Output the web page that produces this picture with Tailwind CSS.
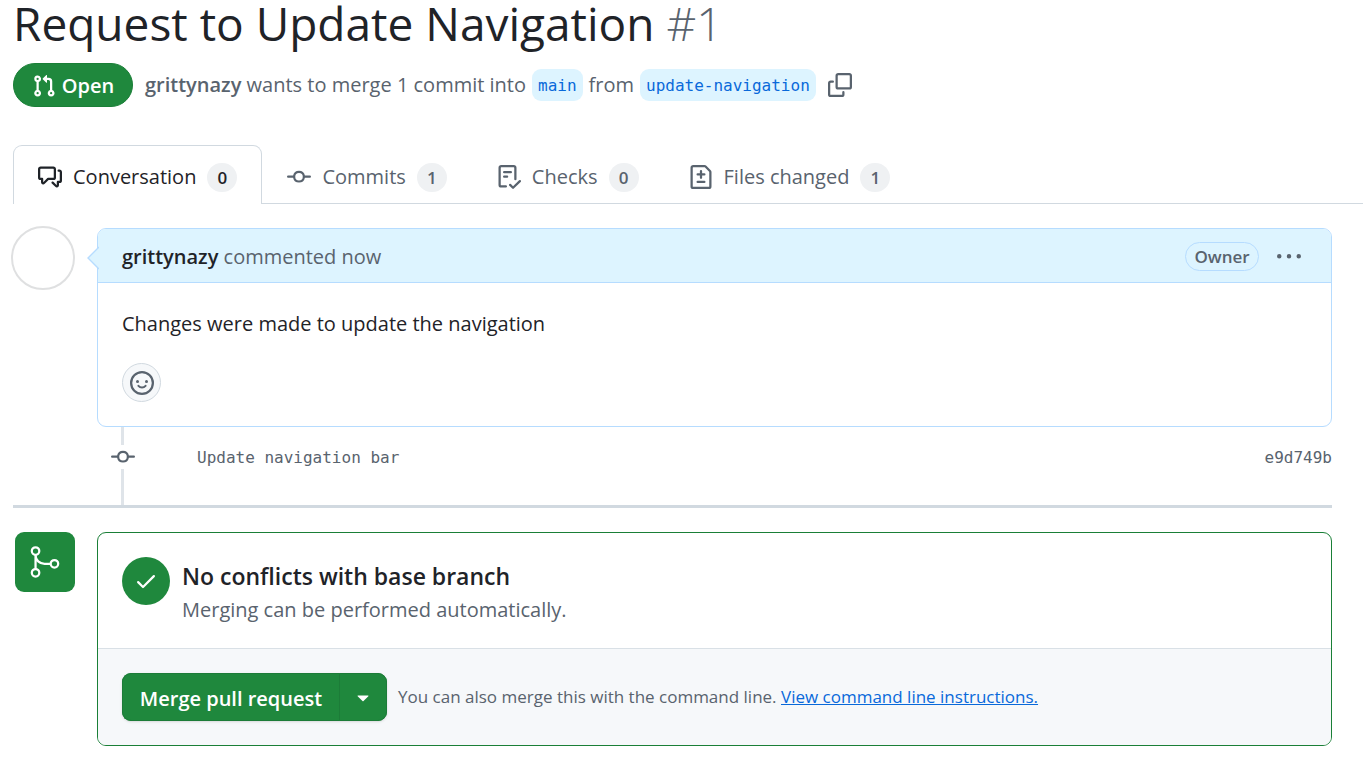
<!DOCTYPE html>
<html lang="en">
<head>
<meta charset="utf-8">
<meta name="viewport" content="width=device-width, initial-scale=1">
<title>Request to Update Navigation #1</title>
<script src="https://cdn.jsdelivr.net/npm/@tailwindcss/browser@4"></script>
</head>
<body class="bg-white font-['Open_Sans','Noto_Sans',sans-serif] text-[20px] leading-[30px] text-[#1f2328]">
<header class="pl-[13px]">
  <h1 class="text-[46px] leading-[46px] font-normal">Request to Update Navigation <span class="font-light text-[#59636e]">#1</span></h1>
  <div class="mt-[17px] flex items-center text-[#59636e]">
    <span class="mr-3 flex h-11 w-[120px] shrink-0 items-center justify-center gap-[6px] rounded-full border border-[#1a7f37] bg-[#1f883d] pt-[2px] font-semibold text-white">
      <svg class="size-6" viewBox="0 0 16 16" fill="currentColor" aria-hidden="true"><path d="M1.5 3.25a2.25 2.25 0 1 1 3 2.122v5.256a2.251 2.251 0 1 1-1.5 0V5.372A2.25 2.25 0 0 1 1.5 3.25Zm5.677-.177L9.573.677A.25.25 0 0 1 10 .854V2.5h1A2.5 2.5 0 0 1 13.5 5v5.628a2.251 2.251 0 1 1-1.5 0V5a1 1 0 0 0-1-1h-1v1.646a.25.25 0 0 1-.427.177L7.177 3.427a.25.25 0 0 1 0-.354ZM3.75 2.5a.75.75 0 1 0 0 1.5.75.75 0 0 0 0-1.5Zm0 9.5a.75.75 0 1 0 0 1.5.75.75 0 0 0 0-1.5Zm8.25.75a.75.75 0 1 0 1.5 0 .75.75 0 0 0-1.5 0Z"/></svg>
      Open
    </span>
    <p class="flex items-center gap-[6px] whitespace-nowrap">
      <span><a href="#" class="font-semibold">grittynazy</a> wants to merge 1 commit into</span>
      <a href="#" class="rounded-[9px] bg-[#ddf4ff] px-[6px] pt-[2px] font-['DejaVu_Sans_Mono',monospace] text-[16px] text-[#0969da]">main</a>
      <span>from</span>
      <a href="#" class="rounded-[9px] bg-[#ddf4ff] px-[6px] pt-[2px] font-['DejaVu_Sans_Mono',monospace] text-[16px] text-[#0969da]">update-navigation</a>
    </p>
    <button type="button" aria-label="Copy branch name" class="ml-3"><svg class="size-6" viewBox="0 0 16 16" fill="currentColor" aria-hidden="true"><path d="M0 6.75C0 5.784.784 5 1.75 5h1.5a.75.75 0 0 1 0 1.5h-1.5a.25.25 0 0 0-.25.25v7.5c0 .138.112.25.25.25h7.5a.25.25 0 0 0 .25-.25v-1.5a.75.75 0 0 1 1.5 0v1.5A1.75 1.75 0 0 1 9.25 16h-7.5A1.75 1.75 0 0 1 0 14.25Z"/><path d="M5 1.75C5 .784 5.784 0 6.75 0h7.5C15.216 0 16 .784 16 1.75v7.5A1.75 1.75 0 0 1 14.25 11h-7.5A1.75 1.75 0 0 1 5 9.25Zm1.75-.25a.25.25 0 0 0-.25.25v7.5c0 .138.112.25.25.25h7.5a.25.25 0 0 0 .25-.25v-7.5a.25.25 0 0 0-.25-.25Z"/></svg></button>
  </div>
  <nav aria-label="Pull request" class="mt-[38px] flex whitespace-nowrap text-[#59636e]">
    <a href="#" aria-current="page" class="flex h-[59px] items-center gap-[11px] rounded-t-[9px] border border-b-0 border-[#d1d9e0] px-6 pt-1 text-[#1f2328]">
      <svg class="size-6" viewBox="0 0 16 16" fill="currentColor" aria-hidden="true"><path d="M1.75 1h8.5c.966 0 1.75.784 1.75 1.75v5.5A1.75 1.75 0 0 1 10.25 10H7.061l-2.574 2.573A1.458 1.458 0 0 1 2 11.543V10h-.25A1.75 1.75 0 0 1 0 8.25v-5.5C0 1.784.784 1 1.75 1ZM1.5 2.75v5.5c0 .138.112.25.25.25h1a.75.75 0 0 1 .75.75v2.19l2.72-2.72a.749.749 0 0 1 .53-.22h3.5a.25.25 0 0 0 .25-.25v-5.5a.25.25 0 0 0-.25-.25h-8.5a.25.25 0 0 0-.25.25Zm13 2a.25.25 0 0 0-.25-.25h-.5a.75.75 0 0 1 0-1.5h.5c.966 0 1.75.784 1.75 1.75v5.5A1.75 1.75 0 0 1 14.25 12H14v1.543a1.458 1.458 0 0 1-2.487 1.03L9.22 12.28a.749.749 0 0 1 .326-1.275.749.749 0 0 1 .734.215l2.22 2.22v-2.19a.75.75 0 0 1 .75-.75h1a.25.25 0 0 0 .25-.25Z"/></svg>
      Conversation <span class="w-[30px] rounded-full bg-[#eff1f3] text-center text-[17px] leading-[29px] font-semibold">0</span>
    </a>
    <div class="flex grow items-center gap-[50px] border-b border-[#d1d9e0] pt-[6px] pl-[25px]">
      <a href="#" class="flex items-center gap-[11px]">
        <svg class="size-6" viewBox="0 0 16 16" fill="currentColor" aria-hidden="true"><path d="M11.93 8.5a4.002 4.002 0 0 1-7.86 0H.75a.75.75 0 0 1 0-1.5h3.32a4.002 4.002 0 0 1 7.86 0h3.32a.75.75 0 0 1 0 1.5Zm-1.43-.75a2.5 2.5 0 1 0-5 0 2.5 2.5 0 0 0 5 0Z"/></svg>
        Commits <span class="w-[30px] rounded-full bg-[#eff1f3] text-center text-[17px] leading-[29px] font-semibold">1</span>
      </a>
      <a href="#" class="flex items-center gap-[11px]">
        <svg class="size-6" viewBox="0 0 16 16" fill="currentColor" aria-hidden="true"><path d="M2.5 1.75v11.5c0 .138.112.25.25.25h3.17a.75.75 0 0 1 0 1.5H2.75A1.75 1.75 0 0 1 1 13.25V1.75C1 .784 1.784 0 2.75 0h8.5C12.216 0 13 .784 13 1.75v7.736a.75.75 0 0 1-1.5 0V1.75a.25.25 0 0 0-.25-.25h-8.5a.25.25 0 0 0-.25.25Zm13.274 9.537-4.557 4.45a.75.75 0 0 1-1.055-.008l-1.943-1.95a.75.75 0 0 1 1.062-1.058l1.419 1.425 4.026-3.932a.75.75 0 1 1 1.048 1.074ZM4.75 4h4.5a.75.75 0 0 1 0 1.5h-4.5a.75.75 0 0 1 0-1.5ZM4 7.75A.75.75 0 0 1 4.75 7h2a.75.75 0 0 1 0 1.5h-2A.75.75 0 0 1 4 7.75Z"/></svg>
        Checks <span class="w-[30px] rounded-full bg-[#eff1f3] text-center text-[17px] leading-[29px] font-semibold">0</span>
      </a>
      <a href="#" class="flex items-center gap-[11px]">
        <svg class="size-6" viewBox="0 0 16 16" fill="currentColor" aria-hidden="true"><path d="M1 1.75C1 .784 1.784 0 2.75 0h7.586c.464 0 .909.184 1.237.513l2.914 2.914c.329.328.513.773.513 1.237v9.586A1.75 1.75 0 0 1 13.25 16H2.75A1.75 1.75 0 0 1 1 14.25Zm1.75-.25a.25.25 0 0 0-.25.25v12.5c0 .138.112.25.25.25h10.5a.25.25 0 0 0 .25-.25V4.664a.25.25 0 0 0-.073-.177l-2.914-2.914a.25.25 0 0 0-.177-.073ZM8 3.25a.75.75 0 0 1 .75.75v1.5h1.5a.75.75 0 0 1 0 1.5h-1.5v1.5a.75.75 0 0 1-1.5 0V7h-1.5a.75.75 0 0 1 0-1.5h1.5V4A.75.75 0 0 1 8 3.25Zm-3 8a.75.75 0 0 1 .75-.75h4.5a.75.75 0 0 1 0 1.5h-4.5a.75.75 0 0 1-.75-.75Z"/></svg>
        Files changed <span class="w-[30px] rounded-full bg-[#eff1f3] text-center text-[17px] leading-[29px] font-semibold">1</span>
      </a>
    </div>
  </nav>
</header>

<main class="mr-[31px] pt-6">
  <section class="flex items-start pl-[11px]">
    <div class="-mt-[2px] mr-[22px] size-16 shrink-0 rounded-full border-2 border-[#dfe0e1]"></div>
    <article class="relative grow rounded-[9px] border border-[#b6dcff]">
      <svg class="absolute top-[17px] -left-[11px] h-6 w-3" viewBox="0 0 12 24" aria-hidden="true"><path d="M12 1 1 12l11 11" fill="#ddf4ff" stroke="#b6dcff" stroke-width="1.4"/></svg>
      <div class="flex h-[54px] items-center rounded-t-lg border-b border-[#b6dcff] bg-[#ddf4ff] pt-[2px] pr-[30px] pl-6 text-[#59636e]">
        <p class="grow"><a href="#" class="font-semibold text-[#1f2328]">grittynazy</a> commented now</p>
        <span class="mr-[18px] w-[74px] rounded-full border border-[#b6dcff] text-center text-[17px] leading-[27px] font-semibold">Owner</span>
        <button type="button" aria-label="Show options"><svg class="size-6" viewBox="0 0 16 16" fill="currentColor" aria-hidden="true"><path d="M8 9a1.5 1.5 0 1 0 0-3 1.5 1.5 0 0 0 0 3ZM1.5 9a1.5 1.5 0 1 0 0-3 1.5 1.5 0 0 0 0 3Zm13 0a1.5 1.5 0 1 0 0-3 1.5 1.5 0 0 0 0 3Z"/></svg></button>
      </div>
      <div class="p-6">
        <p class="pt-[2px]">Changes were made to update the navigation</p>
        <button type="button" aria-label="Add your reaction" class="mt-6 flex size-[39px] items-center justify-center rounded-full border border-[#d1d9e0] bg-[#f6f8fa] text-[#59636e]"><svg class="size-6" viewBox="0 0 16 16" fill="currentColor" aria-hidden="true"><path d="M8 0a8 8 0 1 1 0 16A8 8 0 0 1 8 0ZM1.5 8a6.5 6.5 0 1 0 13 0 6.5 6.5 0 0 0-13 0Z"/><circle cx="5" cy="7" r="1"/><circle cx="11" cy="7" r="1"/><path d="M5.600 9.900c1.300 1.500 3.500 1.500 4.800 0" fill="none" stroke="currentColor" stroke-width="1.300" stroke-linecap="round"/></svg></button>
      </div>
    </article>
  </section>

  <section class="ml-[13px] flex h-[81px] items-start border-b-[3px] border-[#d1d9e0] font-['DejaVu_Sans_Mono',monospace] text-[16px] text-[#59636e]">
    <div class="ml-[97px] flex h-full w-[25px] flex-col items-center">
      <span class="h-[18px] w-[3px] bg-[#dfe4e9]"></span>
      <svg class="size-6 shrink-0" viewBox="0 0 16 16" fill="currentColor" aria-hidden="true"><path d="M11.93 8.5a4.002 4.002 0 0 1-7.86 0H.75a.75.75 0 0 1 0-1.5h3.32a4.002 4.002 0 0 1 7.86 0h3.32a.75.75 0 0 1 0 1.5Zm-1.43-.75a2.5 2.5 0 1 0-5 0 2.5 2.5 0 0 0 5 0Z"/></svg>
      <span class="w-[3px] grow bg-[#dfe4e9]"></span>
    </div>
    <a href="#" class="mt-4 ml-[62px] grow">Update navigation bar</a>
    <a href="#" class="mt-4">e9d749b</a>
  </section>

  <section class="mt-6 flex items-start pl-[15px]">
    <div class="mr-[22px] flex size-[60px] shrink-0 items-center justify-center rounded-[9px] bg-[#1f883d] text-white">
      <svg class="size-9" viewBox="0 0 24 24" fill="none" stroke="currentColor" stroke-width="1.5" aria-hidden="true"><circle cx="5.7" cy="4.7" r="2.5"/><circle cx="5.7" cy="19.2" r="2.5"/><circle cx="18.3" cy="13.2" r="2.5"/><path d="M5.7 7.2v9.5M5.7 7.5c0 3.3 2.7 5.7 6 5.7h4.1"/></svg>
    </div>
    <div class="grow overflow-hidden rounded-[9px] border border-[#1a7f37]">
      <div class="flex h-[115px] items-start gap-3 px-6 pt-6">
        <span class="flex size-12 shrink-0 items-center justify-center rounded-full bg-[#1f883d] text-white"><svg class="size-6" viewBox="0 0 16 16" fill="currentColor" aria-hidden="true"><path d="M13.78 4.22a.75.75 0 0 1 0 1.06l-7.25 7.25a.75.75 0 0 1-1.06 0L2.22 9.28a.751.751 0 0 1 .018-1.042.751.751 0 0 1 1.042-.018L6 10.94l6.72-6.72a.75.75 0 0 1 1.06 0Z"/></svg></span>
        <div class="pt-[2px]">
          <h2 class="text-[23px] leading-[34px] font-semibold">No conflicts with base branch</h2>
          <p class="pt-[2px] text-[#59636e]">Merging can be performed automatically.</p>
        </div>
      </div>
      <div class="flex items-center border-t border-[#d9e0e6] bg-[#f6f8fa] p-6">
        <div class="flex h-12 shrink-0 rounded-[9px] bg-[#1f883d] font-semibold text-white shadow-sm">
          <button type="button" class="w-[217px] rounded-l-[9px] border border-r-0 border-[#1c7c38] pt-[3px] text-center">Merge pull request</button>
          <button type="button" aria-label="Select merge method" class="flex w-12 items-center justify-center rounded-r-[9px] border border-[#1c7c38]"><svg class="size-6" viewBox="0 0 16 16" fill="currentColor" aria-hidden="true"><path d="m4.427 7.427 3.396 3.396a.25.25 0 0 0 .354 0l3.396-3.396A.25.25 0 0 0 11.396 7H4.604a.25.25 0 0 0-.177.427Z"/></svg></button>
        </div>
        <p class="ml-[11px] text-[17px] text-[#59636e]">You can also merge this with the command line. <a href="#" class="text-[#0969da] underline">View command line instructions.</a></p>
      </div>
    </div>
  </section>
</main>
</body>
</html>
